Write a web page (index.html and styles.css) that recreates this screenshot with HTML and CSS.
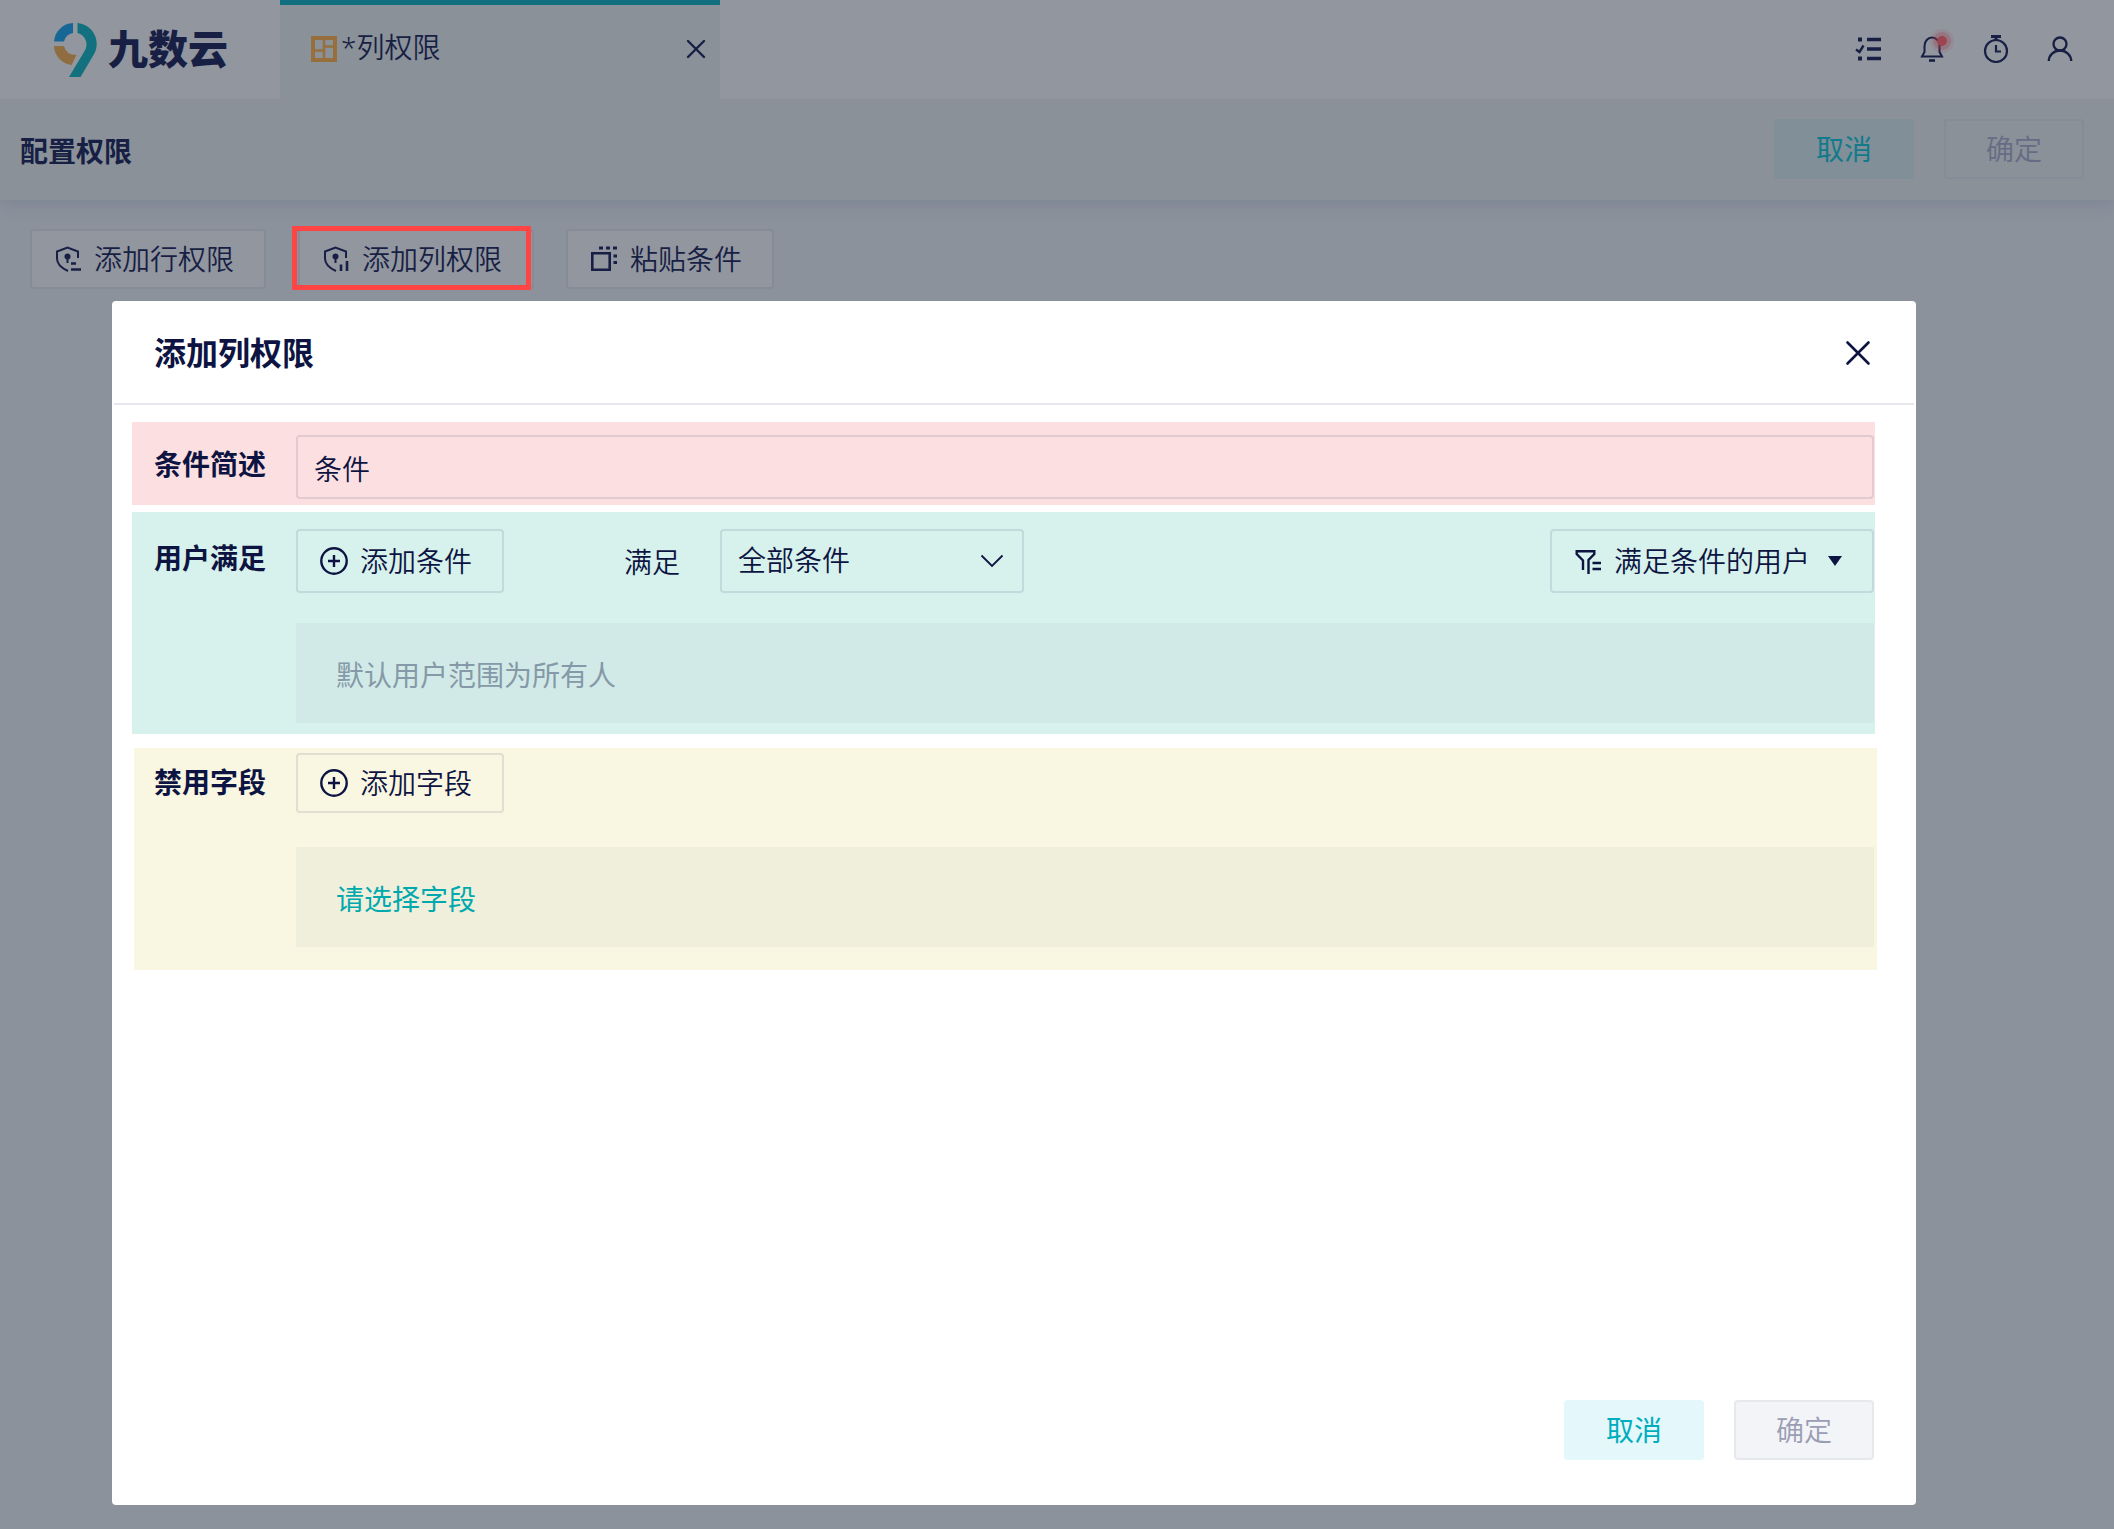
FILE: index.html
```html
<!DOCTYPE html>
<html lang="zh-CN">
<head>
<meta charset="utf-8">
<title>列权限 - 九数云</title>
<link rel="stylesheet" href="styles.css">
</head>
<body>
<div class="page">
  <header class="topbar">
    <a class="brand" href="#">
      <svg class="brand-mark" width="44" height="54" viewBox="0 0 44 54" aria-hidden="true">
        <path d="M19 0A20 20 0 0 0 0 18.500H10A11 11 0 0 1 19 10Z" fill="#176796"/>
        <path d="M0 23A20 20 0 0 0 17.500 42L22.500 32Q12 32 10 23Z" fill="#8f6d41"/>
        <path d="M23.500 0A21 21 0 0 1 39.500 32L26.500 54H15L30 29A12 12 0 0 0 23.500 10Z" fill="#12707f"/>
      </svg>
      <span class="brand-name">九数云</span>
    </a>
    <div class="tab">
      <svg width="26" height="26" viewBox="0 0 26 26" fill="none" stroke="#966f3c" aria-hidden="true">
        <path d="M2 2H24V24H2Z" stroke-width="4"/>
        <path d="M13 3V23M3 14.500H13M13 10.500H23" stroke-width="2.500"/>
      </svg>
      <span class="tab-name">*列权限</span>
      <button class="icon-button" type="button" aria-label="关闭标签">
        <svg width="20" height="20" viewBox="0 0 20 20" fill="none" stroke="currentColor" stroke-width="2.400" stroke-linecap="round"><path d="M2 2L18 18M18 2L2 18"/></svg>
      </button>
    </div>
    <nav class="tools">
      <button class="icon-button" type="button" aria-label="任务">
        <svg width="28" height="28" viewBox="0 0 28 28" fill="none" stroke="currentColor">
          <path d="M13 4.500H27M13 14H27M13 23.500H27" stroke-width="3.600"/>
          <path d="M4 4.500H8M4 23.500H8" stroke-width="4"/>
          <path d="M2 14.500L5.500 17L9.500 10.500" stroke-width="2.400"/>
        </svg>
      </button>
      <button class="icon-button bell" type="button" aria-label="通知">
        <svg width="28" height="28" viewBox="0 0 28 28" fill="none" stroke="currentColor" stroke-width="2">
          <path d="M4 21.500L6.500 17V11A7.500 8.500 0 0 1 21.500 11V17L24 21.500Z"/><path d="M11 25.500H17" stroke-width="2.600"/>
        </svg>
        <span class="bell-dot"></span>
      </button>
      <button class="icon-button" type="button" aria-label="历史">
        <svg width="28" height="28" viewBox="0 0 28 28" fill="none" stroke="currentColor" stroke-width="2.200">
          <circle cx="14" cy="16" r="11"/><path d="M14 10V16.500H19"/><path d="M9 1.500H19" stroke-width="3"/><path d="M14 2V5" stroke-width="3"/>
        </svg>
      </button>
      <button class="icon-button" type="button" aria-label="用户">
        <svg width="28" height="28" viewBox="0 0 28 28" fill="none" stroke="currentColor" stroke-width="2.300">
          <circle cx="14" cy="9" r="6.500"/><path d="M2.800 26A11.200 10.500 0 0 1 25.200 26"/>
        </svg>
      </button>
    </nav>
  </header>

  <div class="subbar">
    <h1 class="subbar-title">配置权限</h1>
    <div class="actions">
      <button class="button button-cancel-dim" type="button">取消</button>
      <button class="button button-confirm-dim" type="button" disabled>确定</button>
    </div>
  </div>

  <div class="toolbar">
    <button class="tool" type="button">
      <svg width="28" height="28" viewBox="0 0 28 28" fill="none" stroke="currentColor" stroke-width="2">
        <path d="M14 26Q3 21 3 13.500V6.500L13.500 2.500L24 6.500V13"/><circle cx="13.500" cy="11.500" r="3" fill="currentColor" stroke="none"/><path d="M13.500 12V18"/><path d="M17 18.500H22M17 24.500H27" stroke-width="2.600"/>
      </svg>
      <span class="button-text">添加行权限</span>
    </button>
    <button class="tool tool-marked" type="button">
      <svg width="28" height="28" viewBox="0 0 28 28" fill="none" stroke="currentColor" stroke-width="2">
        <path d="M14 26Q3 21 3 13.500V6.500L13.500 2.500L24 6.500V13"/><circle cx="13.500" cy="11.500" r="3" fill="currentColor" stroke="none"/><path d="M13.500 12V18"/><path d="M19 19.500V26M25 16V26" stroke-width="2.600"/>
      </svg>
      <span class="button-text">添加列权限</span>
    </button>
    <button class="tool" type="button">
      <svg width="28" height="28" viewBox="0 0 28 28" fill="none" stroke="currentColor">
        <path d="M2.300 8.300H19.700V24.700H2.300Z" stroke-width="2.600"/><path d="M9 3H13M16 3H20M23 3H27M23.500 11H27M23.500 17.500H27" stroke-width="3"/>
      </svg>
      <span class="button-text">粘贴条件</span>
    </button>
  </div>
</div>

<div class="overlay">
  <section class="modal" role="dialog" aria-modal="true" aria-labelledby="modal-title">
    <header class="modal-head">
      <h2 class="modal-title" id="modal-title">添加列权限</h2>
      <button class="icon-button" type="button" aria-label="关闭">
        <svg width="26" height="26" viewBox="0 0 26 26" fill="none" stroke="currentColor" stroke-width="2.600" stroke-linecap="round"><path d="M2.500 2.500L23.500 23.500M23.500 2.500L2.500 23.500"/></svg>
      </button>
    </header>

    <div class="row row-brief">
      <label class="row-label" for="brief">条件简述</label>
      <input class="field" id="brief" type="text" value="条件">
    </div>

    <div class="row row-users">
      <span class="row-label">用户满足</span>
      <div class="row-body">
        <div class="controls">
          <button class="outline" type="button">
            <svg width="28" height="28" viewBox="0 0 28 28" fill="none" stroke="currentColor" stroke-width="2.400"><circle cx="14" cy="14" r="12.700"/><path d="M14 8V20M8 14H20"/></svg>
            <span class="button-text">添加条件</span>
          </button>
          <label class="match-label" for="match">满足</label>
          <div class="picker">
            <select class="picker-select" id="match"><option>全部条件</option></select>
            <svg class="picker-arrow" width="24" height="14" viewBox="0 0 24 14" fill="none" stroke="currentColor" stroke-width="1.800"><path d="M1.500 1.500L12 12L22.500 1.500"/></svg>
          </div>
          <button class="outline outline-end" type="button">
            <svg width="28" height="28" viewBox="0 0 28 28" fill="none" stroke="currentColor" stroke-width="2.400"><path d="M9 23V13.500L2.700 7V4.200H20.300V7L14.500 13V27"/><path d="M18.500 16H27M18.500 22H27"/></svg>
            <span class="button-text">满足条件的用户</span>
            <svg class="caret" width="14" height="10" viewBox="0 0 14 10" fill="currentColor"><path d="M0 0H14L7 10Z"/></svg>
          </button>
        </div>
        <p class="panel panel-hint">默认用户范围为所有人</p>
      </div>
    </div>

    <div class="row row-fields">
      <span class="row-label">禁用字段</span>
      <div class="row-body">
        <div class="controls">
          <button class="outline outline-low" type="button">
            <svg width="28" height="28" viewBox="0 0 28 28" fill="none" stroke="currentColor" stroke-width="2.400"><circle cx="14" cy="14" r="12.700"/><path d="M14 8V20M8 14H20"/></svg>
            <span class="button-text">添加字段</span>
          </button>
        </div>
        <p class="panel panel-prompt">请选择字段</p>
      </div>
    </div>

    <footer class="modal-foot">
      <button class="button button-cancel" type="button">取消</button>
      <button class="button button-confirm" type="button" disabled>确定</button>
    </footer>
  </section>
</div>
</body>
</html>
```

FILE: styles.css
```css
:root {
  --ink: #0d1442;
  --ink-dim: #181f44;
  --line: rgba(13, 20, 66, 0.1);
}

* {
  box-sizing: border-box;
}

body {
  margin: 0;
  min-height: 100vh;
  background: #8c929c;
  color: var(--ink);
  font: 350 28px/40px "Noto Sans CJK SC", sans-serif;
}

h1,
h2,
p {
  margin: 0;
}

button,
input,
select {
  margin: 0;
  padding: 0;
  border: 0;
  background: none;
  color: inherit;
  font: inherit;
}

svg {
  display: block;
  flex: none;
}

.page {
  color: var(--ink-dim);
}

.icon-button {
  display: flex;
  position: relative;
}

.button-text {
  padding-bottom: 2px;
}

.topbar {
  display: flex;
  position: relative;
  z-index: 1;
  height: 99px;
  background: #92969f;
}

.brand {
  display: flex;
  align-items: center;
  gap: 10px;
  width: 280px;
  padding-left: 54px;
  color: inherit;
  text-decoration: none;
}

.brand-name {
  padding-bottom: 6px;
  font-size: 40px;
  font-weight: 900;
}

.tab {
  display: flex;
  align-items: center;
  gap: 4px;
  width: 440px;
  padding: 0 14px 6px 31px;
  border-top: 5px solid #126f80;
  background: #8a9199;
}

.tab-name {
  flex: 1;
  padding-bottom: 4px;
  font-family: "Noto Sans", "Noto Sans CJK SC", sans-serif;
}

.tools {
  display: flex;
  align-items: center;
  gap: 36px;
  margin-left: auto;
  padding: 0 40px 2px 0;
}

.bell-dot {
  position: absolute;
  top: 1px;
  right: -1px;
  width: 10px;
  height: 10px;
  border-radius: 50%;
  background: #9c4550;
  box-shadow: 0 0 0 4px rgba(156, 69, 80, 0.3), 0 0 0 7px rgba(156, 69, 80, 0.12);
}

.subbar {
  display: flex;
  align-items: center;
  justify-content: space-between;
  height: 101px;
  padding: 0 30px 0 20px;
  background: #8a9199;
  box-shadow: 0 4px 16px rgba(80, 90, 125, 0.25);
}

.subbar-title {
  font-size: 28px;
  font-weight: 700;
}

.actions {
  display: flex;
  gap: 30px;
  padding-bottom: 2px;
}

.button {
  width: 140px;
  height: 60px;
  padding-bottom: 2px;
  border-radius: 4px;
}

.button-cancel-dim {
  background: #808f98;
  color: #127a8a;
  font-weight: 400;
}

.button-confirm-dim {
  border: 2px solid #858b97;
  color: #666c84;
}

.toolbar {
  display: flex;
  gap: 32px;
  padding: 29px 30px;
}

.tool {
  display: flex;
  align-items: center;
  gap: 12px;
  height: 60px;
  padding: 0 30px 0 22px;
  border: 2px solid #858b97;
  border-radius: 4px;
  background: #92969f;
}

.tool-marked {
  position: relative;
}

.tool-marked::after {
  content: "";
  position: absolute;
  inset: -5px 1px -3px -8px;
  border: 5px solid #ff4444;
}

.overlay {
  display: flex;
  position: absolute;
  z-index: 2;
  inset: 0;
  min-height: 1200px;
  padding: 301px 198px 24px 112px;
}

.modal {
  display: flex;
  flex: 1;
  flex-direction: column;
  border-radius: 4px;
  background: #ffffff;
}

.modal-head {
  display: flex;
  align-items: center;
  justify-content: space-between;
  height: 104px;
  margin: 0 2px 17px;
  padding: 2px 43px 0 40px;
  border-bottom: 2px solid #e7e8ee;
}

.modal-title {
  padding-bottom: 4px;
  font-size: 32px;
  font-weight: 700;
}

.row {
  display: flex;
  gap: 30px;
  margin: 0 41px 0 20px;
  padding: 0 1px 0 22px;
}

.row-label {
  width: 112px;
  font-weight: 700;
  line-height: 56px;
}

.row-body {
  flex: 1;
}

.row-brief {
  margin-bottom: 7px;
  padding-top: 13px;
  padding-bottom: 6px;
  background: #fcdfe0;
}

.row-users {
  margin-bottom: 14px;
  padding-top: 17px;
  padding-bottom: 11px;
  background: #d7f1ec;
}

.row-fields {
  margin-right: 39px;
  margin-left: 22px;
  padding: 5px 3px 23px 20px;
  background: #f9f6e2;
}

.field {
  flex: 1;
  height: 64px;
  padding: 2px 16px 0;
  border: 2px solid var(--line);
  border-radius: 4px;
}

.controls {
  display: flex;
}

.outline {
  display: flex;
  align-items: center;
  gap: 12px;
  height: 64px;
  padding: 0 30px 0 22px;
  border: 2px solid var(--line);
  border-radius: 4px;
}

.outline-low {
  height: 60px;
}

.outline-end {
  margin-left: auto;
}

.caret {
  margin-left: 6px;
}

.match-label {
  margin-left: 120px;
  line-height: 64px;
}

.picker {
  position: relative;
  width: 304px;
  margin-left: 40px;
}

.picker-select {
  width: 100%;
  height: 64px;
  padding: 0 48px 4px 16px;
  border: 2px solid var(--line);
  border-radius: 4px;
  appearance: none;
}

.picker-arrow {
  position: absolute;
  top: 25px;
  right: 20px;
  pointer-events: none;
}

.panel {
  height: 100px;
  padding-left: 40px;
  line-height: 102px;
}

.panel-hint {
  margin-top: 30px;
  background: #d1eae7;
  color: #8599a8;
  font-weight: 400;
}

.panel-prompt {
  margin-top: 34px;
  background: #f0efdc;
  color: #00a9ad;
  font-weight: 400;
}

.modal-foot {
  display: flex;
  justify-content: flex-end;
  gap: 30px;
  margin-top: auto;
  padding: 0 42px 45px;
}

.button-cancel {
  background: #e4f7fa;
  color: #00adbe;
  font-weight: 400;
}

.button-confirm {
  border: 2px solid #e7e8ec;
  background: #f3f4f8;
  color: #9a9db4;
}
```
